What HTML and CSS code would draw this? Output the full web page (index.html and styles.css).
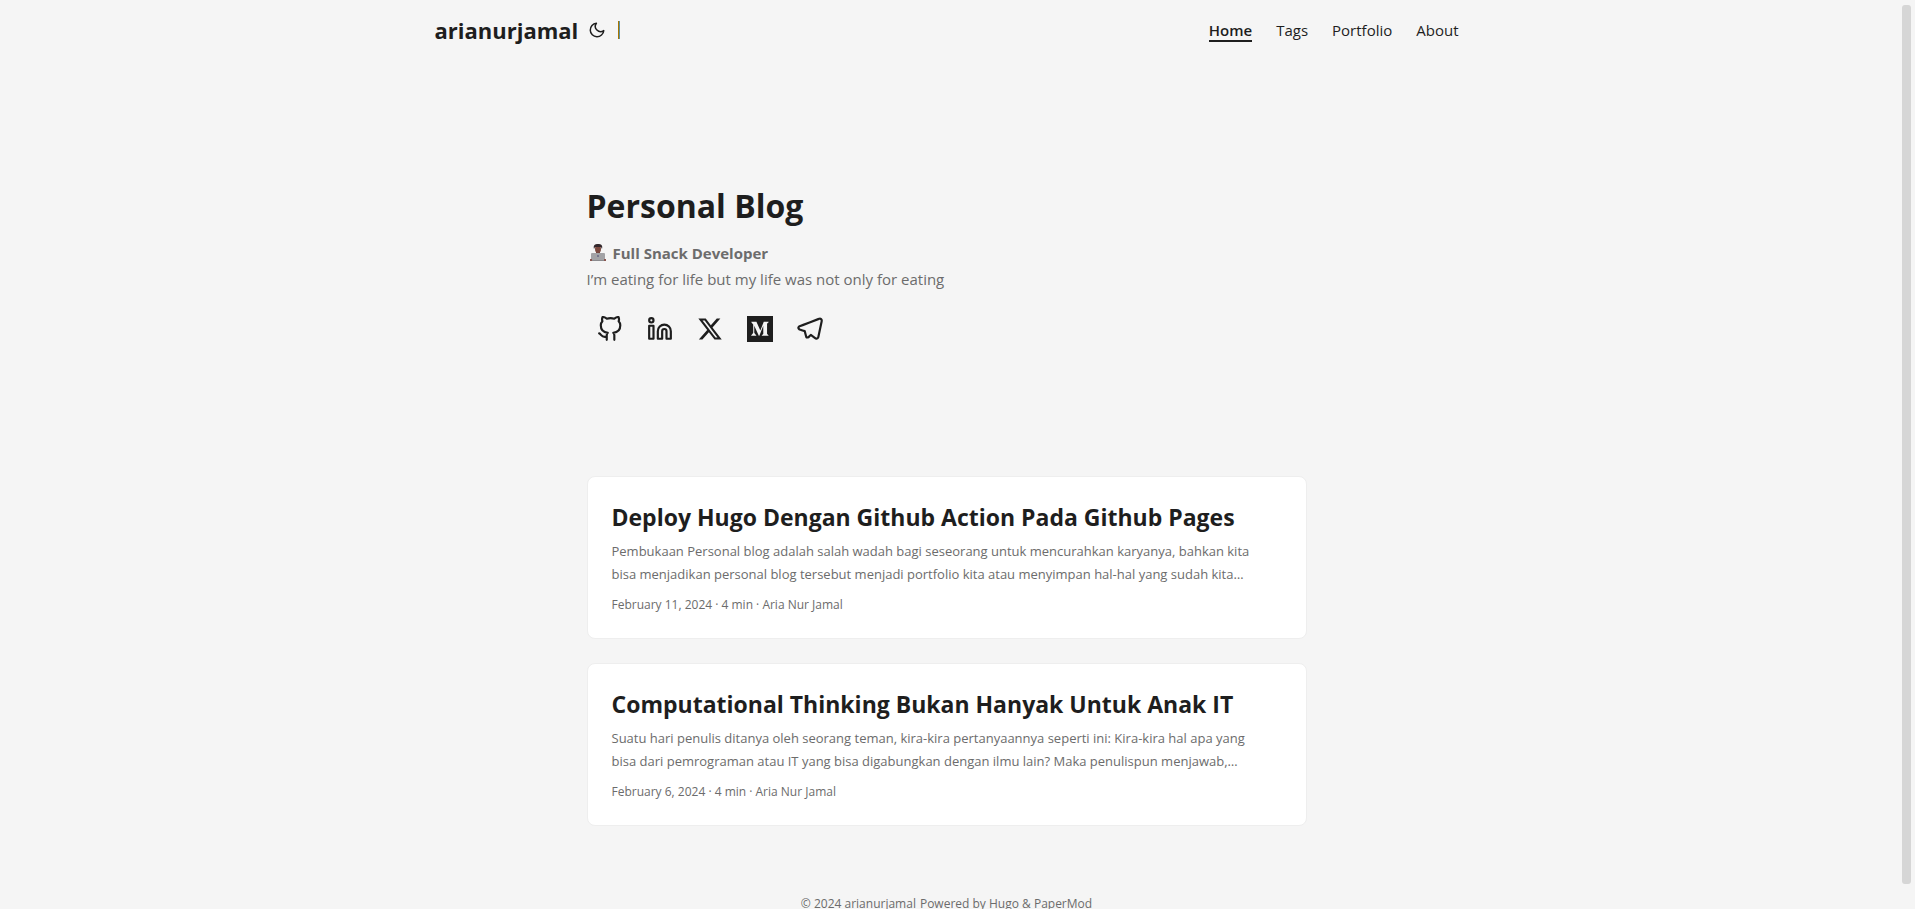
FILE: index.html
```html
<!DOCTYPE html>
<html lang="id">
<head>
<meta charset="utf-8">
<title>arianurjamal</title>
<meta name="viewport" content="width=device-width, initial-scale=1">
<link rel="stylesheet" href="styles.css">
</head>
<body>
<div class="page">
  <header class="header">
    <nav class="nav">
      <div class="logo">
        <a class="logo-link" href="#">arianurjamal</a>
        <button class="theme-toggle" type="button" aria-label="Toggle theme">
          <svg width="18" height="18" viewBox="0 0 24 24" fill="none" stroke="currentColor" stroke-width="2" stroke-linecap="round" stroke-linejoin="round"><path d="M21 12.79A9 9 0 1 1 11.21 3 7 7 0 0 0 21 12.79z"/></svg>
        </button>
        <span class="divider"></span>
      </div>
      <ul class="menu">
        <li><a class="menu-link active" href="#">Home</a></li>
        <li><a class="menu-link" href="#">Tags</a></li>
        <li><a class="menu-link" href="#">Portfolio</a></li>
        <li><a class="menu-link" href="#">About</a></li>
      </ul>
    </nav>
  </header>
  <main class="main">
    <section class="intro">
      <h1 class="intro-title">Personal Blog</h1>
      <div class="intro-text">
        <p class="role">
          <svg class="emoji" width="18" height="18" viewBox="0 0 18 18" aria-hidden="true">
            <path d="M3 12c0-2 2-3 6-3s6 1 6 3v4H3z" fill="#8a8a90"/>
            <rect x="7" y="7" width="4" height="3" fill="#6b4038"/>
            <ellipse cx="9" cy="5" rx="3" ry="4" fill="#7c4a40"/>
            <path d="M5 5c-1-4 1-5 4-5s5 1 4 5l-1-2H6z" fill="#33282c"/>
            <rect x="2" y="9" width="14" height="7" rx="1" fill="#a3a3a6"/>
            <path d="M2 16h14v1H2z" fill="#8b8b8e"/>
            <circle cx="9" cy="12" r="1" fill="#696680"/>
            <path d="M1 15h2v2H1zM15 15h2v2h-2z" fill="#8b5650"/>
          </svg>
          <strong>Full Snack Developer</strong>
        </p>
        <p>I’m eating for life but my life was not only for eating</p>
      </div>
      <div class="social">
        <a href="#" aria-label="GitHub"><svg viewBox="0 0 24 24" fill="none" stroke="currentColor" stroke-width="2" stroke-linecap="round" stroke-linejoin="round"><path d="M9 19c-5 1.5-5-2.5-7-3m14 6v-3.87a3.37 3.37 0 0 0-.94-2.61c3.14-.35 6.44-1.54 6.44-7A5.44 5.44 0 0 0 20 4.77 5.07 5.07 0 0 0 19.91 1S18.73.65 16 2.48a13.38 13.38 0 0 0-7 0C6.27.65 5.09 1 5.09 1A5.07 5.07 0 0 0 5 4.77a5.44 5.44 0 0 0-1.5 3.78c0 5.42 3.3 6.61 6.44 7A3.37 3.37 0 0 0 9 18.13V22"/></svg></a>
        <a href="#" aria-label="LinkedIn"><svg viewBox="0 0 24 24" fill="none" stroke="currentColor" stroke-width="2" stroke-linecap="round" stroke-linejoin="round"><path d="M16 8a6 6 0 0 1 6 6v7h-4v-7a2 2 0 0 0-2-2 2 2 0 0 0-2 2v7h-4v-7a6 6 0 0 1 6-6z"/><rect x="2" y="9" width="4" height="12"/><circle cx="4" cy="4" r="2"/></svg></a>
        <a href="#" aria-label="X"><svg viewBox="0 0 24 24" fill="currentColor"><path d="M18.244 2.25h3.308l-7.227 8.26 8.502 11.24H16.17l-5.214-6.817L4.99 21.75H1.68l7.73-8.835L1.254 2.25H8.08l4.713 6.231zm-1.161 17.52h1.833L7.084 4.126H5.117z"/></svg></a>
        <a href="#" aria-label="Medium"><svg viewBox="0 32 448 448" fill="currentColor"><path d="M0 32v448h448V32H0zm372.2 106.1l-24 23c-2.1 1.6-3.1 4.2-2.7 6.7v169.3c-.4 2.6.6 5.2 2.7 6.7l23.5 23v5.1h-118V367l24.3-23.6c2.4-2.4 2.4-3.1 2.4-6.7V199.8l-67.6 171.6h-9.1L125 199.8v115c-.7 4.8 1 9.7 4.4 13.2l31.6 38.3v5.1H71.2v-5.1l31.6-38.3c3.4-3.5 4.9-8.4 4.1-13.2v-133c.4-3.7-1-7.3-3.8-9.8L75 138.1V133h87.3l67.4 148L289 133.1h83.2v5z"/></svg></a>
        <a href="#" aria-label="Telegram"><svg viewBox="0 0 24 24" fill="none" stroke="currentColor" stroke-width="2" stroke-linecap="round" stroke-linejoin="round"><path d="M21.198 2.433a2.242 2.242 0 0 0-1.022.215l-8.609 3.33c-2.068.8-4.133 1.598-5.724 2.21a405.15 405.15 0 0 1-2.849 1.09c-.42.147-.99.332-1.473.901-.728.968.193 1.798.919 2.286 1.61.516 3.275 1.009 4.654 1.472.509 1.793.997 3.592 1.48 5.388.16.36.506.494.864.498l-.002.018s.281.028.555-.038a2.1 2.1 0 0 0 .933-.517c.345-.324 1.28-1.244 1.811-1.764l3.999 2.952.032.018s.442.311 1.09.355c.324.022.75-.04 1.116-.308.37-.27.613-.702.728-1.196.342-1.492 2.61-12.285 2.997-14.072l-.01.042c.27-1.006.17-1.928-.455-2.474a1.654 1.654 0 0 0-1.044-.407z"/></svg></a>
      </div>
    </section>
    <article class="card">
      <h2 class="card-title"><a href="#">Deploy Hugo Dengan Github Action Pada Github Pages</a></h2>
      <p class="card-text">Pembukaan Personal blog adalah salah wadah bagi seseorang untuk mencurahkan karyanya, bahkan kita<br>bisa menjadikan personal blog tersebut menjadi portfolio kita atau menyimpan hal-hal yang sudah kita…</p>
      <div class="card-meta">February 11, 2024 · 4 min · Aria Nur Jamal</div>
    </article>
    <article class="card">
      <h2 class="card-title"><a href="#">Computational Thinking Bukan Hanyak Untuk Anak IT</a></h2>
      <p class="card-text">Suatu hari penulis ditanya oleh seorang teman, kira-kira pertanyaannya seperti ini: Kira-kira hal apa yang<br>bisa dari pemrograman atau IT yang bisa digabungkan dengan ilmu lain? Maka penulispun menjawab,…</p>
      <div class="card-meta">February 6, 2024 · 4 min · Aria Nur Jamal</div>
    </article>
  </main>
  <footer class="footer">
    <span>© 2024 <a href="#">arianurjamal</a></span>
    <span>Powered by <a href="#">Hugo</a> &amp; <a href="#">PaperMod</a></span>
  </footer>
</div>
<div class="scroll-thumb"></div>
</body>
</html>
```

FILE: styles.css
```css
* {
  box-sizing: border-box;
  margin: 0;
  padding: 0;
}

body {
  height: 100vh;
  overflow: hidden;
  background: #f5f5f5;
  color: #1e1e1e;
  font-family: "Segoe UI", "Open Sans", "Noto Sans", sans-serif;
  font-size: 16px;
  line-height: 26px;
}

a {
  color: inherit;
  text-decoration: none;
}

.page {
  height: 100%;
  overflow-y: auto;
  padding-right: 22px;
  scrollbar-width: none;
}

.nav {
  display: flex;
  justify-content: space-between;
  max-width: 1072px;
  margin: 0 auto;
  padding: 0 24px;
  line-height: 60px;
}

.logo {
  display: flex;
  align-items: center;
}

.logo-link {
  font-size: 22px;
  font-weight: 700;
}

.theme-toggle {
  display: flex;
  margin: 0 12px 0 10px;
  border: 0;
  background: none;
  color: inherit;
}

.divider {
  width: 2px;
  height: 18px;
  border-left: 1px solid #a87600;
  border-right: 1px solid #5f93a5;
}

.menu {
  display: flex;
  gap: 24px;
  list-style: none;
  font-size: 15px;
}

.menu-link.active {
  border-bottom: 2px solid #1e1e1e;
  font-weight: 600;
}

.main {
  max-width: 768px;
  margin: 0 auto;
  padding: 24px;
}

.intro {
  display: flex;
  flex-direction: column;
  justify-content: center;
  min-height: 320px;
  margin: 24px 0 48px;
}

.intro-title {
  font-size: 32px;
  line-height: 44px;
}

.intro-text {
  margin: 12px 0 14px;
  color: #6c6c6c;
  font-size: 15px;
}

.role {
  display: flex;
  align-items: center;
  gap: 6px;
  padding-left: 2px;
}

.social {
  display: flex;
  gap: 24px;
  padding: 10px;
}

.social a,
.social svg {
  display: block;
  width: 26px;
  height: 26px;
}

.card {
  margin-bottom: 24px;
  padding: 24px;
  border: 1px solid #eee;
  border-radius: 8px;
  background: #fff;
}

.card-title {
  font-size: 23px;
  line-height: 32px;
}

.card-text {
  margin: 7px 0 9px;
  color: #6c6c6c;
  font-size: 13px;
  line-height: 23px;
  white-space: nowrap;
}

.card-meta {
  color: #6c6c6c;
  font-size: 12px;
  line-height: 19px;
}

.footer {
  display: flex;
  justify-content: center;
  gap: 4px;
  padding: 18px 24px;
  color: #6c6c6c;
  font-size: 12px;
  line-height: 24px;
}

.scroll-thumb {
  position: fixed;
  top: 5px;
  right: 4px;
  bottom: 25px;
  width: 9px;
  border-radius: 3px;
  background: #d6d6d6;
}
```
